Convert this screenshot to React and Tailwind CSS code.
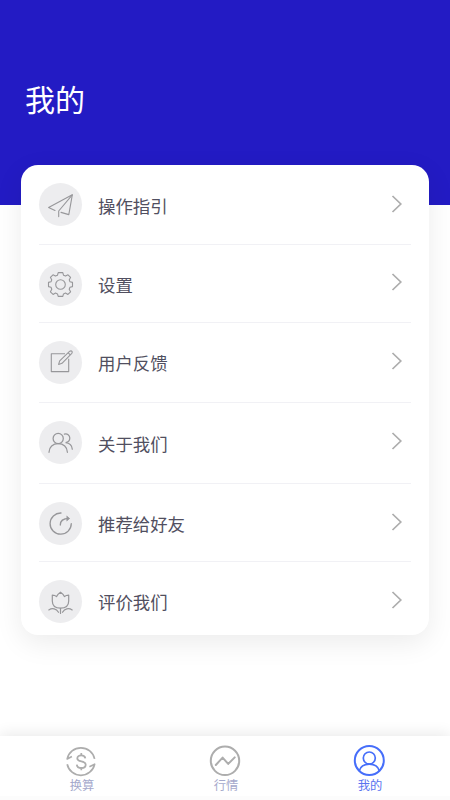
import React, { useState } from "react";

const PlaneIcon = () => (
  <svg viewBox="0 0 43 43" className="w-[43px] h-[43px]" fill="none" stroke="currentColor" strokeWidth="1.1" strokeLinejoin="round" strokeLinecap="round">
    <path d="M16 27.5 L9.6 24.6 L33.3 11.8 L29.8 31.6 L22 29.4" />
    <path d="M33.3 11.8 L19.7 28 V33.6" />
  </svg>
);

const GearIcon = () => (
  <svg viewBox="0 0 43 43" className="w-[43px] h-[43px]" fill="none" stroke="currentColor" strokeWidth="1.1" strokeLinejoin="round">
    <circle cx="21.5" cy="21.5" r="4.8" />
    <path d="M19.2 9.6 H23.8 L24.5 12.2 L26.6 13.1 L29 11.8 L31.6 14.3 L30.2 16.9 L31 18.7 L33.5 19.4 V23.6 L31 24.3 L30.2 26.3 L31.6 28.8 L28.9 31.4 L26.5 30.1 L24.5 30.9 L23.8 33.4 H19.2 L18.5 30.9 L16.5 30.1 L14.1 31.4 L11.4 28.8 L12.8 26.3 L12 24.3 L9.5 23.6 V19.4 L12 18.7 L12.8 16.9 L11.4 14.3 L14 11.8 L16.4 13.1 L18.5 12.2 Z" />
  </svg>
);

const EditIcon = () => (
  <svg viewBox="0 0 43 43" className="w-[43px] h-[43px]" fill="none" stroke="currentColor" strokeWidth="1.1" strokeLinejoin="round">
    <path d="M26 12.8 H12.3 V30.6 H29.7 V17.8" />
    <path d="M19.6 23.4 L20.7 19.8 L30.8 10.2 Q32.2 9.4 33 10.4 Q33.6 11.4 32.8 12.4 L23 22.3 Z" />
    <path d="M29.2 11.8 L31.3 13.9" />
  </svg>
);

const PeopleIcon = () => (
  <svg viewBox="0 0 43 43" className="w-[43px] h-[43px]" fill="none" stroke="currentColor" strokeWidth="1.25" strokeLinecap="round">
    <circle cx="19.2" cy="17.5" r="5.1" />
    <path d="M10 31.3 C10 26 14 22.7 19.2 22.7 C24.4 22.7 28.4 26 28.4 31.3" />
    <path d="M25.4 13.2 C28.2 12.3 30.8 14.4 30.8 17.1 C30.8 19.6 29.2 21.2 26.6 21.6 C30.4 22 33 24.8 33.3 28.2" />
  </svg>
);

const ShareIcon = () => (
  <svg viewBox="0 0 43 43" className="w-[43px] h-[43px]" fill="none" stroke="currentColor" strokeWidth="1.3" strokeLinecap="round" strokeLinejoin="round">
    <path d="M22 11 A10.6 10.6 0 1 0 32.3 21.6" />
    <path d="M21.3 23 C21.3 18.8 24 16.5 29.8 16.5" />
    <path d="M28 14.2 L30.6 16.5 L28 18.8 Z" fill="currentColor" strokeWidth="0.6" />
  </svg>
);

const TulipIcon = () => (
  <svg viewBox="0 0 43 43" className="w-[43px] h-[43px]" fill="none" stroke="currentColor" strokeWidth="1.2" strokeLinecap="round" strokeLinejoin="round">
    <path d="M21.5 28.2 C16 28.2 13.3 25.5 13.3 21 V15.2 C15.1 15.2 16.6 15.7 17.6 16.6 C18.4 14.8 19.8 13.3 21.5 12.2 C23.2 13.3 24.6 14.8 25.4 16.6 C26.4 15.7 27.9 15.2 29.7 15.2 V21 C29.7 25.5 27 28.2 21.5 28.2 Z" />
    <path d="M21.5 28.4 V33.4" />
    <path d="M9.8 29.9 C13.4 27.6 17.3 28.6 19.5 32.3" />
    <path d="M33.2 29.9 C29.6 27.6 25.7 28.6 23.5 32.3" />
  </svg>
);

const ExchangeIcon = () => (
  <svg viewBox="0 0 32 32" className="w-8 h-8" fill="none" stroke="currentColor" strokeWidth="1.7" strokeLinejoin="round">
    <path d="M6.9 11.6 L2.2 13.9 A14 14 0 0 1 29.6 13.9" />
    <path d="M24.4 21.7 L29.6 19.2 A14 14 0 0 1 2.2 19.2" />
    <path d="M20.3 13.4 C20 11.3 18.4 10.4 16.2 10.4 C14 10.4 12.3 11.4 12.3 13.4 C12.3 17.6 20.7 15.2 20.7 19.7 C20.7 21.9 18.8 23 16.4 23 C13.9 23 12 21.9 11.8 19.6" strokeWidth="1.8" />
    <path d="M16.3 8.1 V10.4 M16.3 23 V25.3" />
  </svg>
);

const MarketIcon = () => (
  <svg viewBox="0 0 32 32" className="w-8 h-8" fill="none" stroke="currentColor" strokeWidth="2" strokeLinecap="round" strokeLinejoin="round">
    <circle cx="16" cy="15.8" r="14.2" />
    <path d="M6.8 20 L13.6 12.6 L19.2 18.9 L25.7 12.4" />
  </svg>
);

const UserIcon = () => (
  <svg viewBox="0 0 32 32" className="w-8 h-8" fill="none" stroke="currentColor" strokeWidth="1.7">
    <circle cx="16.3" cy="15.5" r="14.5" strokeWidth="2" />
    <circle cx="16.3" cy="13" r="6" />
    <path d="M6.2 26 C7.4 21.4 11.4 19.1 16.3 19.1 C21.2 19.1 25.2 21.4 26.4 26" />
  </svg>
);

const menuItems = [
  { label: "操作指引", icon: PlaneIcon, height: "h-20", labelTop: "mt-[10px]", arrowTop: "mt-[11px]" },
  { label: "设置", icon: GearIcon, height: "h-[78px]", labelTop: "mt-[9px]", arrowTop: "mt-[9px]" },
  { label: "用户反馈", icon: EditIcon, height: "h-20", labelTop: "mt-[9px]", arrowTop: "mt-[10px]" },
  { label: "关于我们", icon: PeopleIcon, height: "h-[81px]", labelTop: "mt-[10px]", arrowTop: "mt-[10px]" },
  { label: "推荐给好友", icon: ShareIcon, height: "h-[78px]", labelTop: "mt-[9px]", arrowTop: "mt-[10px]" },
  { label: "评价我们", icon: TulipIcon, height: "h-[73px]", labelTop: "mt-[9px]", arrowTop: "mt-[10px]" },
];

const tabs = [
  { id: "convert", label: "换算", icon: ExchangeIcon },
  { id: "market", label: "行情", icon: MarketIcon },
  { id: "mine", label: "我的", icon: UserIcon },
];

const App = () => {
  const [activeTab, setActiveTab] = useState("mine");

  return (
    <div className="w-[450px] h-[800px] bg-white flex flex-col overflow-hidden font-['Noto_Sans_CJK_SC',sans-serif]">
      {/* Header */}
      <header className="h-[205px] shrink-0 bg-[#231bc4] pl-[25px] pt-[76px]">
        <h1 className="text-[30px] leading-[44px] text-white">我的</h1>
      </header>

      {/* Menu card, pulled up over the header */}
      <main className="flex-1 -mt-10 pl-[21px] pr-[21px]">
        <ul className="h-[470px] rounded-[17px] bg-white px-[18px] shadow-[0_8px_28px_rgba(0,0,0,0.08)]">
          {menuItems.map(({ label, icon: Icon, height, labelTop, arrowTop }) => (
            <li
              key={label}
              className={`${height} flex items-start pt-[18px] border-b border-[#f1f1f5] last:border-b-0`}
            >
              <span className="w-[43px] h-[43px] shrink-0 rounded-full bg-[#ededef] text-[#97979a]">
                <Icon />
              </span>
              <span className={`ml-4 ${labelTop} flex-1 text-[17.4px] leading-[26px] text-[#514f60]`}>{label}</span>
              <svg viewBox="0 0 12 20" className={`w-3 h-5 mr-2 ${arrowTop}`} fill="none" stroke="#adadad" strokeWidth="1.7">
                <path d="M1.5 2 L9.8 10 L1.5 18" />
              </svg>
            </li>
          ))}
        </ul>
      </main>

      {/* Bottom tabs */}
      <nav className="h-16 shrink-0 bg-white border-b-4 border-[#fcfcfc] px-[9px] flex justify-between shadow-[0_-2px_14px_rgba(0,0,0,0.09)]">
        {tabs.map(({ id, label, icon: Icon }) => (
          <button
            key={id}
            onClick={() => setActiveTab(id)}
            className={`w-36 pt-[9px] flex flex-col items-center ${activeTab === id ? "text-[#466efa]" : "text-[#adadad]"}`}
          >
            <Icon />
            <span className={`pl-0.5 text-[12.3px] leading-4 ${activeTab === id ? "text-[#5a73f0]" : "text-[#a5a9cc]"}`}>
              {label}
            </span>
          </button>
        ))}
      </nav>
    </div>
  );
};

export default App;
